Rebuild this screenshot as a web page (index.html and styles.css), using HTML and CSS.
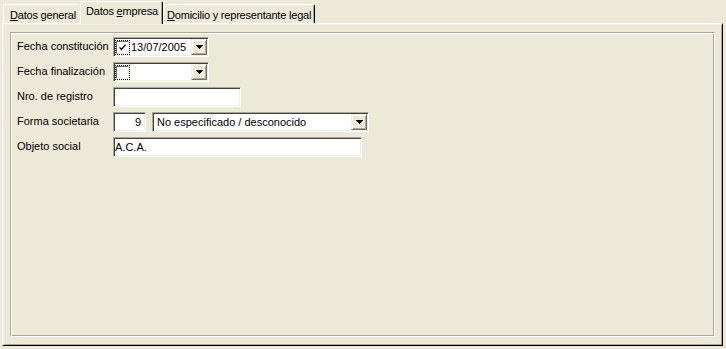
FILE: index.html
```html
<!DOCTYPE html>
<html lang="es">
<head>
    <meta charset="UTF-8">
    <meta name="viewport" content="width=device-width, initial-scale=1.0">
    <title>Datos empresa</title>
    <link rel="stylesheet" href="styles.css">
</head>
<body>
    <div class="tabs">
        <div class="tab tab-general"><u>D</u>atos general</div>
        <div class="tab tab-empresa active">Datos <u>e</u>mpresa</div>
        <div class="tab tab-domicilio"><u>D</u>omicilio y representante legal</div>
    </div>

    <div class="page">
        <div class="frame">
            <div class="form">
                <label>Fecha constitución</label>
                <div class="field date">
                    <span class="check">
                        <svg width="7" height="7" viewBox="0 0 7 7"><polyline points="0.6,3.4 2.4,5.4 6.4,0.8" fill="none" stroke="#000" stroke-width="1.3"/></svg>
                    </span>
                    <span class="value">13/07/2005</span>
                    <span class="drop"><svg width="7" height="4" viewBox="0 0 7 4"><path d="M0 0h7v1h-1v1h-1v1h-1v1h-1v-1h-1v-1h-1v-1h-1z" fill="#000" shape-rendering="crispEdges"/></svg></span>
                </div>

                <label>Fecha finalización</label>
                <div class="field date">
                    <span class="check"></span>
                    <span class="value"></span>
                    <span class="drop"><svg width="7" height="4" viewBox="0 0 7 4"><path d="M0 0h7v1h-1v1h-1v1h-1v1h-1v-1h-1v-1h-1v-1h-1z" fill="#000" shape-rendering="crispEdges"/></svg></span>
                </div>

                <label>Nro. de registro</label>
                <div class="field registro"></div>

                <label>Forma societaria</label>
                <div class="row">
                    <div class="field codigo">9</div>
                    <div class="field combo">
                        <span class="value">No especificado / desconocido</span>
                        <span class="drop"><svg width="7" height="4" viewBox="0 0 7 4"><path d="M0 0h7v1h-1v1h-1v1h-1v1h-1v-1h-1v-1h-1v-1h-1z" fill="#000" shape-rendering="crispEdges"/></svg></span>
                    </div>
                </div>

                <label>Objeto social</label>
                <div class="field objeto">A.C.A.</div>
            </div>
        </div>
    </div>
</body>
</html>
```

FILE: styles.css
```css
body {
    margin: 0;
    height: 349px;
    display: flex;
    flex-direction: column;
    background-color: #ece9d8;
    font-family: "Liberation Sans", Arial, sans-serif;
    font-size: 11px;
    color: #000;
    overflow: hidden;
}

/* tab strip */
.tabs {
    display: flex;
    align-items: flex-end;
    height: 23px;
    padding-left: 3px;
    flex-shrink: 0;
}
.tab {
    box-sizing: border-box;
    height: 19px;
    padding: 4px 0 0 6px;
    line-height: 13px;
    white-space: nowrap;
    letter-spacing: -0.2px;
    border: 1px solid;
    border-bottom: none;
    border-color: #fff #000 transparent #fff;
    border-radius: 2px 2px 0 0;
    box-shadow: inset -1px 0 #aca899;
    background-color: #ece9d8;
}
.tab-general {
    width: 77px;
    border-right: none;
    box-shadow: none;
}
.tab-empresa {
    width: 83px;
    padding-left: 5px;
}
.tab-domicilio {
    width: 152px;
    padding-left: 3px;
}
.tab.active {
    position: relative;
    z-index: 1;
    height: 23px;
    padding-top: 3px;
    margin-bottom: -1px;
}

/* tab page */
.page {
    flex: 1;
    display: flex;
    margin: 0 3px 3px 2px;
    padding: 8px 7px 8px 7px;
    border: 1px solid;
    border-color: #fff #000 #000 #fff;
    box-shadow: inset 1px 1px #f1efe2, inset -1px -1px #aca899;
}
.frame {
    flex: 1;
    border: 1px solid;
    border-color: #aca899 #fff #fff #aca899;
    box-shadow: inset 1px 1px #fff, inset -1px -1px #aca899;
    padding: 4px 0 0 6px;
}

.form {
    display: grid;
    grid-template-columns: 96px auto;
    grid-auto-rows: 20px;
    row-gap: 5px;
    align-items: center;
    justify-items: start;
}
.form label {
    padding-bottom: 2px;
}
.row {
    display: flex;
    gap: 6px;
}

/* sunken edit boxes */
.field {
    box-sizing: border-box;
    display: flex;
    align-items: center;
    height: 20px;
    padding: 1px;
    background-color: #fff;
    border: 1px solid;
    border-color: #aca899 #fff #fff #aca899;
    box-shadow: inset 1px 1px #404040, inset -1px -1px #f1efe2;
    line-height: 16px;
    white-space: nowrap;
}
.date {
    width: 96px;
}
.registro {
    width: 128px;
}
.codigo {
    width: 33px;
    justify-content: flex-end;
    padding-right: 4px;
}
.combo {
    width: 217px;
}
.combo .value {
    padding-left: 3px;
}
.objeto {
    width: 249px;
    padding-left: 1px;
}
.value {
    flex: 1;
}
.date .value {
    padding-left: 2px;
}

.check {
    box-sizing: border-box;
    width: 13px;
    height: 13px;
    margin-left: 1px;
    display: flex;
    align-items: center;
    justify-content: center;
    background-color: #fff;
    border: 1px solid;
    border-color: #716f64 #f1efe2 #f1efe2 #716f64;
    outline: 1px dotted #000;
}

/* dropdown buttons */
.drop {
    box-sizing: border-box;
    width: 16px;
    height: 16px;
    flex-shrink: 0;
    display: flex;
    align-items: center;
    justify-content: center;
    background-color: #ece9d8;
    border: 1px solid;
    border-color: #f1efe2 #716f64 #716f64 #f1efe2;
    box-shadow: inset 1px 1px #fff, inset -1px -1px #aca899;
}
```
